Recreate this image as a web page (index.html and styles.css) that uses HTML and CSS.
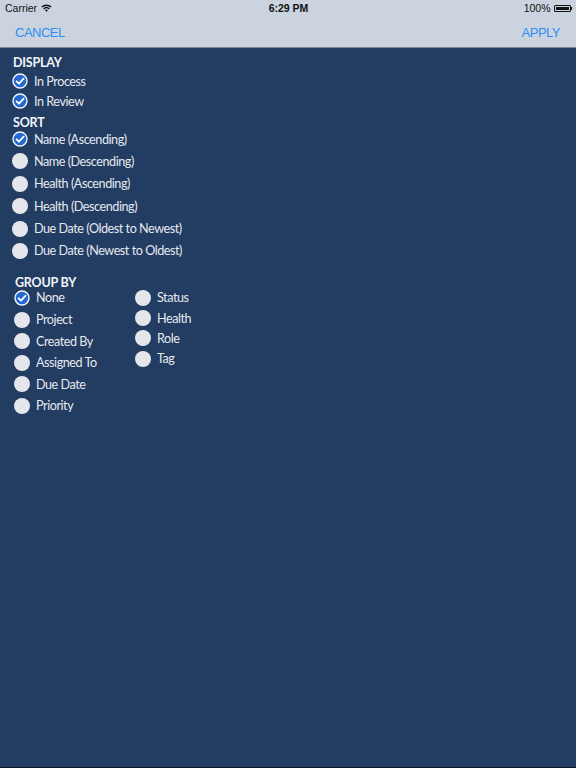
FILE: index.html
```html
<!DOCTYPE html>
<html lang="en">
<head>
<meta charset="utf-8">
<title>Filter</title>
<link rel="stylesheet" href="styles.css">
</head>
<body>
<header class="topbar">
  <div class="status">
    <div class="status-left">
      <span>Carrier</span>
      <svg class="wifi" width="11" height="8" viewBox="0 0 11 8">
        <path d="M0.4 2.6 A7.4 7.4 0 0 1 10.6 2.6 L9.6 3.6 A6 6 0 0 0 1.4 3.6 Z" fill="#111"/>
        <path d="M2.2 4.4 A4.8 4.8 0 0 1 8.8 4.4 L7.8 5.4 A3.4 3.4 0 0 0 3.2 5.4 Z" fill="#111"/>
        <path d="M4 6.2 A2.2 2.2 0 0 1 7 6.2 L5.5 7.8 Z" fill="#111"/>
      </svg>
    </div>
    <div class="status-time">6:29 PM</div>
    <div class="status-right">
      <span>100%</span>
      <span class="battery"><span class="battery-fill"></span></span>
      <span class="battery-tip"></span>
    </div>
  </div>
  <nav class="navbar">
    <button class="nav-btn">CANCEL</button>
    <button class="nav-btn">APPLY</button>
  </nav>
</header>

<main class="panel">
  <section class="group">
    <h2 class="group-title">DISPLAY</h2>
    <ul class="opts opts-display">
      <li class="opt"><svg class="mark" viewBox="0 0 16 16"><circle cx="8" cy="8" r="7" class="on"/><path d="M4.6 8.3 L7 10.7 L11.6 5.7" class="tick"/></svg>In Process</li>
      <li class="opt"><svg class="mark" viewBox="0 0 16 16"><circle cx="8" cy="8" r="7" class="on"/><path d="M4.6 8.3 L7 10.7 L11.6 5.7" class="tick"/></svg>In Review</li>
    </ul>
  </section>

  <section class="group group-sort">
    <h2 class="group-title">SORT</h2>
    <ul class="opts opts-sort">
      <li class="opt"><svg class="mark" viewBox="0 0 16 16"><circle cx="8" cy="8" r="7" class="on"/><path d="M4.6 8.3 L7 10.7 L11.6 5.7" class="tick"/></svg>Name (Ascending)</li>
      <li class="opt"><span class="dot"></span>Name (Descending)</li>
      <li class="opt"><span class="dot"></span>Health (Ascending)</li>
      <li class="opt"><span class="dot"></span>Health (Descending)</li>
      <li class="opt"><span class="dot"></span>Due Date (Oldest to Newest)</li>
      <li class="opt"><span class="dot"></span>Due Date (Newest to Oldest)</li>
    </ul>
  </section>

  <section class="group group-by">
    <h2 class="group-title">GROUP BY</h2>
    <div class="cols">
      <ul class="opts opts-left">
        <li class="opt"><svg class="mark" viewBox="0 0 16 16"><circle cx="8" cy="8" r="7" class="on"/><path d="M4.6 8.3 L7 10.7 L11.6 5.7" class="tick"/></svg>None</li>
        <li class="opt"><span class="dot"></span>Project</li>
        <li class="opt"><span class="dot"></span>Created By</li>
        <li class="opt"><span class="dot"></span>Assigned To</li>
        <li class="opt"><span class="dot"></span>Due Date</li>
        <li class="opt"><span class="dot"></span>Priority</li>
      </ul>
      <ul class="opts opts-right">
        <li class="opt"><span class="dot"></span>Status</li>
        <li class="opt"><span class="dot"></span>Health</li>
        <li class="opt"><span class="dot"></span>Role</li>
        <li class="opt"><span class="dot"></span>Tag</li>
      </ul>
    </div>
  </section>
</main>
</body>
</html>
```

FILE: styles.css
```css
* {
  box-sizing: border-box;
}

html, body {
  margin: 0;
  padding: 0;
  height: 100%;
}

body {
  width: 576px;
  height: 768px;
  background: #223c62;
  font-family: "Lato", "Noto Sans", sans-serif;
  color: #e6e9ef;
  display: flex;
  flex-direction: column;
  border-bottom: 1px solid #0e1a2c;
}

/* top chrome */
.topbar {
  background: #cbd3df;
  border-bottom: 1px solid #7d8798;
  height: 48px;
}

.status {
  height: 16px;
  display: grid;
  grid-template-columns: 1fr auto 1fr;
  align-items: center;
  padding: 0 4px 0 5px;
  font-family: "Liberation Sans", Arial, sans-serif;
  font-size: 10.5px;
  color: #111;
}

.status-left {
  display: flex;
  align-items: center;
  gap: 4px;
}

.wifi {
  display: block;
}

.status-time {
  font-weight: bold;
  font-size: 10.5px;
}

.status-right {
  display: flex;
  justify-content: flex-end;
  align-items: center;
}

.battery {
  margin-left: 3px;
  width: 17px;
  height: 7px;
  border: 1px solid #111;
  border-radius: 1px;
  padding: 1px;
  display: flex;
}

.battery-fill {
  flex: 1;
  background: #111;
}

.battery-tip {
  width: 1.5px;
  height: 3px;
  background: #111;
}

.navbar {
  height: 31px;
  display: flex;
  justify-content: space-between;
  align-items: center;
  padding: 1px 16px 0 15px;
}

.nav-btn {
  background: none;
  border: 0;
  padding: 0;
  font-family: "Liberation Sans", Arial, sans-serif;
  font-size: 13px;
  color: #2f8ef4;
  letter-spacing: -0.5px;
}

/* options panel */
.panel {
  padding: 8px 0 0 12px;
}

.group {
  margin: 0;
}

.group-title {
  margin: 0;
  font-size: 12.5px;
  line-height: 14px;
  font-weight: bold;
  color: #f2f4f8;
  padding-left: 1px;
  letter-spacing: -0.2px;
}

.opts {
  list-style: none;
  margin: 0;
  padding: 0;
  display: flex;
  flex-direction: column;
}

.opt {
  height: 16px;
  display: flex;
  align-items: center;
  gap: 6px;
  font-size: 12.6px;
  letter-spacing: -0.45px;
  white-space: nowrap;
}

.mark {
  width: 16px;
  height: 16px;
  flex: none;
}

.mark .on {
  fill: #2468d2;
  stroke: #f4f6fa;
  stroke-width: 1.4;
}

.mark .tick {
  fill: none;
  stroke: #ffffff;
  stroke-width: 1.8;
  stroke-linecap: round;
  stroke-linejoin: round;
}

.dot {
  width: 16px;
  height: 16px;
  flex: none;
  border-radius: 50%;
  background: #e4e6eb;
}

.opts-display {
  margin-top: 3px;
  gap: 4px;
}

.group-sort {
  margin-top: 7px;
}

.opts-sort {
  margin-top: 1px;
  gap: 6.4px;
}

.group-by {
  margin-top: 17px;
  padding-left: 2px;
}

.cols {
  display: flex;
}

.opts-left {
  width: 121px;
  gap: 5.6px;
}

.opts-right {
  gap: 4.2px;
}
```
